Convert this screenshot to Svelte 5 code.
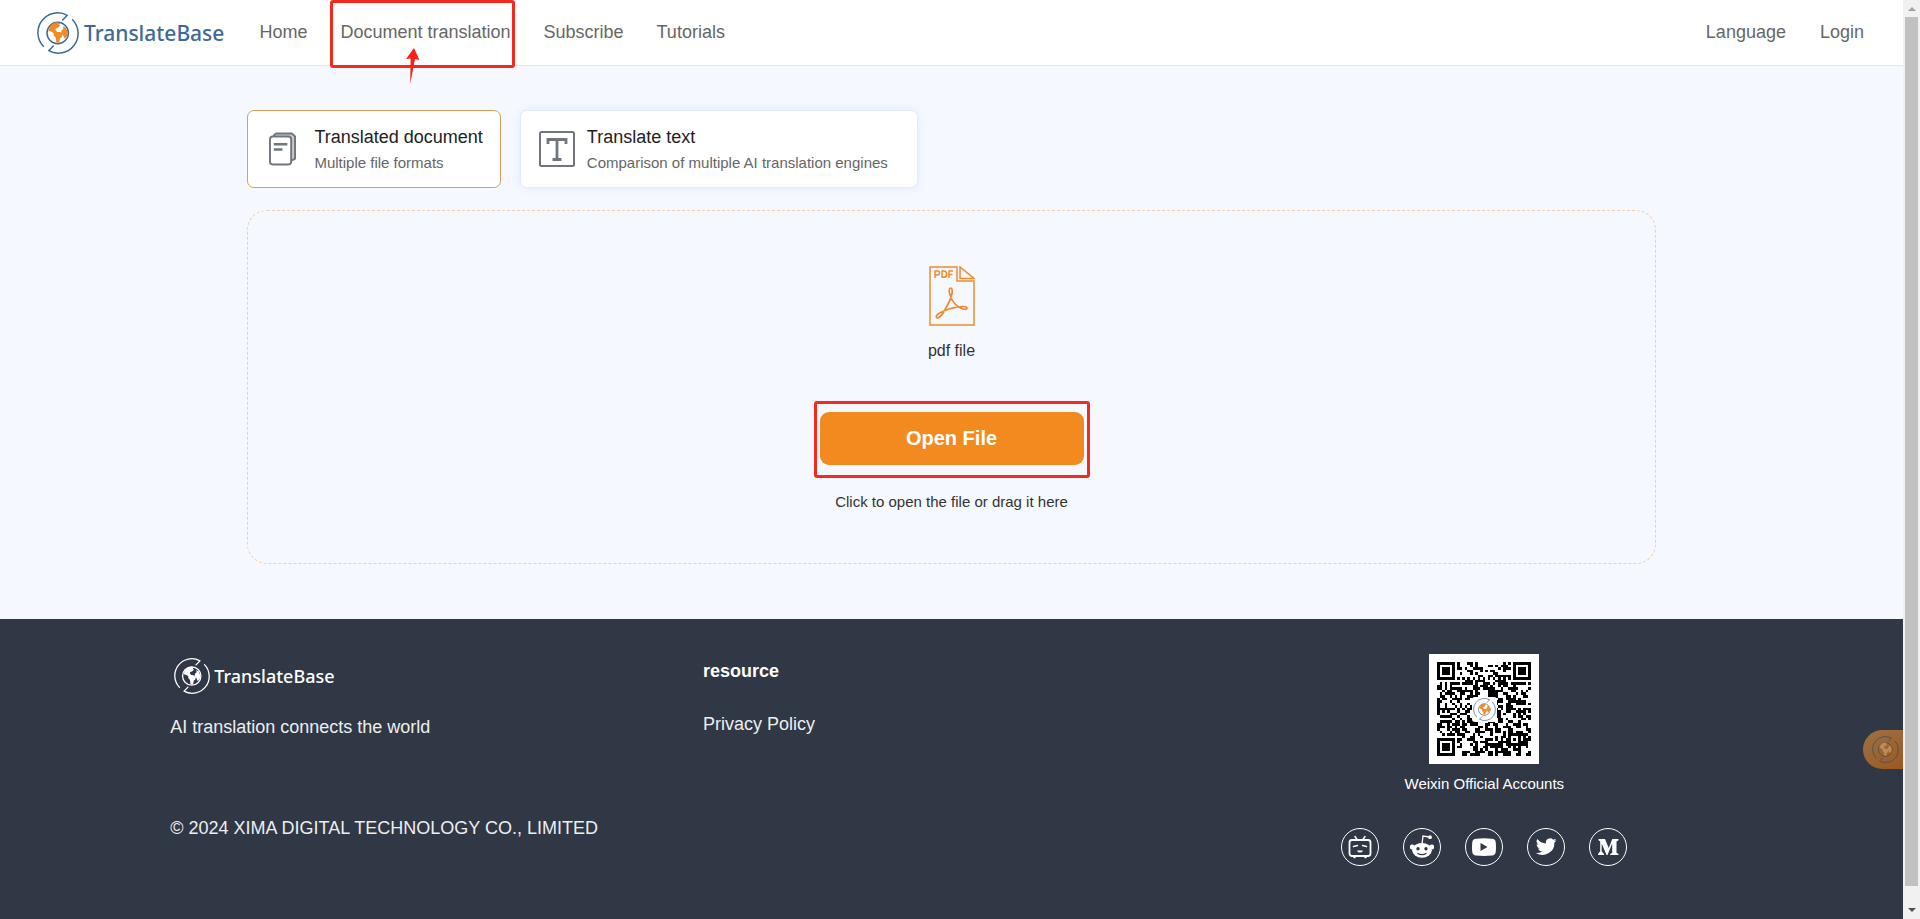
<script>
  const SIZE = 37;

  // Square rings: three finder marks and one alignment mark.
  function ring(x, y, cx, cy, reach) {
    const d = Math.max(Math.abs(x - cx), Math.abs(y - cy));
    if (d > reach) return null;
    return reach === 4 ? d === 3 || d <= 1 : d !== 1;
  }

  function buildCode() {
    let seed = 20243;
    let path = '';
    for (let y = 0; y < SIZE; y++) {
      for (let x = 0; x < SIZE; x++) {
        seed = (seed * 1103515245 + 12345) % 2147483648;
        let dark = (seed >> 12) % 100 < 50;
        if (x === 6 || y === 6) dark = (x + y) % 2 === 0;
        const marks = [
          ring(x, y, 3, 3, 4),
          ring(x, y, 33, 3, 4),
          ring(x, y, 3, 33, 4),
          ring(x, y, 30, 30, 2)
        ];
        for (const m of marks) if (m !== null) dark = m;
        if (dark) path += `M${x} ${y}h1v1h-1z`;
      }
    }
    return path;
  }

  const code = buildCode();
  const nav = ['Home', 'Document translation', 'Subscribe', 'Tutorials'];
</script>

{#snippet emblem(line, land)}
  <svg class="emblem" viewBox="0 0 42 42" fill="none" aria-hidden="true">
    <g stroke={line} stroke-width="1.500" stroke-linecap="round" stroke-linejoin="round">
      <path d="M6.400 34.300A19.800 19.800 0 0 1 30.300 3.300L25.700 8" />
      <path d="M35.600 7.700A19.800 19.800 0 0 1 11.700 38.700L16.300 34" />
      <circle cx="20.700" cy="21" r="10.700" />
    </g>
    <path fill={land} d="M11.500 19c.5-4.500 4-8.500 8.500-8.700l3 .7-1 1.500 1.200 1-2.100 2.200-2.300.7-.2 1.800 1.600 1.700 2.800.2 2.800 2.200-1 2.700-1.800 1.600-.7 4-2 .2-1.200-1-.4-4-2.100-2.500.2-2-2.900-1.700z" />
    <path fill={land} d="M26 14.200l2.800 1.300 1.900 4.800-.5 3.700-2.700 2.700-1.500-3.700-1.900-1.700.5-3.100 1.700-1.200z" />
  </svg>
{/snippet}

<div class="screen">
  <div class="page">
    <header>
      <a class="brand" href="#home">
        {@render emblem('#3d6a9b', '#f38a22')}
        <span>TranslateBase</span>
      </a>
      <nav>
        {#each nav as item, i}
          <a href="#{item.split(' ')[0].toLowerCase()}" class:marked={i === 1}>
            {item}
            {#if i === 1}
              <svg class="arrow" viewBox="0 0 14 36" aria-hidden="true">
                <path d="M8 0l5.500 12-4.500-1L4.200 36 4.600 10.500 0 11z" fill="#fb2015" />
              </svg>
            {/if}
          </a>
        {/each}
      </nav>
      <nav class="account">
        <a href="#language">Language</a>
        <a href="#login">Login</a>
      </nav>
    </header>

    <main>
      <div class="modes">
        <button class="mode active" type="button">
          <svg class="docs" viewBox="0 0 28 34" fill="none" stroke="#71757f" stroke-width="2" stroke-linejoin="round" aria-hidden="true">
            <path d="M5 4V3l2-2h17l3 3v23l-3 2" fill="#c9cbd0" />
            <rect x="1" y="4" width="22" height="29" rx="3" fill="#fff" />
            <path d="M5 12h14M5 17.500h9" stroke-width="2.500" />
          </svg>
          <span class="label"><b>Translated document</b><small>Multiple file formats</small></span>
        </button>
        <button class="mode text" type="button">
          <svg class="letter" viewBox="0 0 36 36" fill="none" stroke="#71757f" aria-hidden="true">
            <rect x="1" y="1" width="34" height="34" rx="1.500" stroke-width="2" />
            <path d="M9 13V8.500h18V13M18 8.500v20M13.500 28.500h9" stroke-width="2.800" />
          </svg>
          <span class="label"><b>Translate text</b><small>Comparison of multiple AI translation engines</small></span>
        </button>
      </div>

      <section class="drop">
        <svg class="pdf" viewBox="0 0 46 60" fill="none" stroke="#ee8c2d" stroke-width="1.500" aria-hidden="true">
          <path d="M28 1H1v58h44V15H28z" />
          <path d="M31 1v11.500h14z" />
          <path d="M6 12V5h2.500a2 2 0 0 1 0 4H6M13 5v6.300h1.500a3.150 3.150 0 0 0 0-6.300zM20 12V5h4M20 8.500h3.500" />
          <path d="M21.500 22C25 22 23 32 17 42 13 50 9 53 7.500 51.500 6 49 12 45.500 20 43 28 41 37 39.500 38 42 38 45 31 43 26 38 21 33 18.500 22 21.500 22z" stroke-width="1.700" />
        </svg>
        <p class="kind">pdf file</p>
        <div class="frame"><button class="open" type="button">Open File</button></div>
        <p class="hint">Click to open the file or drag it here</p>
      </section>
    </main>

    <footer>
      <div class="columns">
        <div class="about">
          <a class="brand small" href="#home">
            {@render emblem('#ffffff', '#ffffff')}
            <span>TranslateBase</span>
          </a>
          <p class="motto">AI translation connects the world</p>
          <p>© 2024 XIMA DIGITAL TECHNOLOGY CO., LIMITED</p>
        </div>
        <div class="links">
          <h2>resource</h2>
          <a href="#privacy">Privacy Policy</a>
        </div>
        <div class="contact">
          <div class="qr">
            <svg viewBox="0 0 37 37" shape-rendering="crispEdges" role="img" aria-label="QR code"><path d={code} /></svg>
            <span class="seal">{@render emblem('#5c7f9f', '#f38a22')}</span>
          </div>
          <p>Weixin Official Accounts</p>
          <div class="social">
            <a href="#bilibili" aria-label="Bilibili">
              <svg viewBox="0 0 24 24" fill="none" stroke="#fff" stroke-width="1.800" stroke-linecap="round">
                <rect x="1.500" y="5" width="21" height="16" rx="2.500" />
                <path d="M7 1.500L9.500 5M17 1.500L14.500 5M5.500 11.500l4-1M18.500 11.500l-4-1M10 16l1 .8 1-.8 1 .8 1-.8M6 22.500h1M17 22.500h1" stroke-width="1.500" />
              </svg>
            </a>
            <a href="#reddit" aria-label="Reddit">
              <svg viewBox="0 0 24 24">
                <ellipse cx="12" cy="15.300" rx="9.800" ry="7.400" fill="#fff" />
                <circle cx="2.300" cy="12" r="2.500" fill="#fff" /><circle cx="21.700" cy="12" r="2.500" fill="#fff" />
                <path d="M12 9l1-8 6.500 1" fill="none" stroke="#fff" stroke-width="1.300" />
                <circle cx="20" cy="2.200" r="1.900" fill="#fff" />
                <circle cx="8" cy="13.800" r="1.700" fill="#303845" /><circle cx="16" cy="13.800" r="1.700" fill="#303845" />
                <path d="M7.500 18.200q4.500 3 9 0" fill="none" stroke="#303845" stroke-width="1.200" />
              </svg>
            </a>
            <a href="#youtube" aria-label="YouTube">
              <svg viewBox="0 0 24 24"><path fill="#fff" d="M4 3.700q8-.8 16 0 3.500.3 3.700 3.500.6 5 0 10-.4 3-3.700 3.300-8 .8-16 0-3.300-.3-3.700-3.300-.6-5 0-10Q.6 4 4 3.700z" /><path fill="#303845" d="M8.500 8v8l7-4z" /></svg>
            </a>
            <a href="#twitter" aria-label="Twitter">
              <svg viewBox="0 0 24 24"><path fill="#fff" d="M22.500 5.300a8 8 0 0 1-2.400.7 4.200 4.200 0 0 0 1.800-2.300 8.500 8.500 0 0 1-2.700 1A4.200 4.200 0 0 0 12 8.500 12 12 0 0 1 3.300 4.100a4.200 4.200 0 0 0 1.300 5.600 4 4 0 0 1-1.900-.5 4.200 4.200 0 0 0 3.400 4.200 4 4 0 0 1-1.900.1 4.200 4.200 0 0 0 3.900 2.900A8.500 8.500 0 0 1 1.900 18a12 12 0 0 0 18.500-10.600 9 9 0 0 0 2.100-2.100z" /></svg>
            </a>
            <a href="#medium" aria-label="Medium">
              <svg viewBox="0 0 24 24"><path fill="#fff" d="M2.500 4H9l3.700 9L16.300 4h6.200v1.200l-2 1.300v11.200l2 1.200V20h-8.300v-1.100l2-1.200V8.500L11.500 20h-1L5.700 8.500v7.700l2.300 2.700V20H2v-1.100l2.200-2.700V6.500L2.500 5.200z" /></svg>
            </a>
          </div>
        </div>
      </div>
      <button class="float" type="button" aria-label="Assistant">{@render emblem('#525156', '#c08a55')}</button>
    </footer>
  </div>

  <div class="scroll" aria-hidden="true">
    <i class="up"></i>
    <div class="thumb"></div>
    <i class="down"></i>
  </div>
</div>

<style>
  :global(body) {
    margin: 0;
    font-family: "Liberation Sans", Arial, sans-serif;
  }
  .screen {
    display: flex;
    min-height: 100vh;
  }
  .page {
    flex: 1;
    display: flex;
    flex-direction: column;
    background: #f5f8ff;
  }
  a {
    color: inherit;
    text-decoration: none;
  }
  p,
  h2 {
    margin: 0;
  }
  svg {
    display: block;
  }
  button {
    font-family: inherit;
    cursor: pointer;
  }
  header {
    display: flex;
    align-items: center;
    height: 65px;
    padding: 0 39px 0 37px;
    background: #fff;
    border-bottom: 1px solid #e4e5e8;
    color: #666;
    font-size: 18px;
  }
  .brand {
    display: flex;
    align-items: center;
    gap: 5px;
    color: #3d6a9b;
    font: 500 21px "Noto Sans", sans-serif;
  }
  .brand .emblem {
    width: 42px;
    height: 42px;
  }
  nav {
    display: flex;
    gap: 33px;
    margin-left: 35px;
    padding-bottom: 2px;
    line-height: 22px;
  }
  .account {
    gap: 34px;
    margin-left: auto;
  }
  .marked {
    position: relative;
  }
  .marked::before {
    content: "";
    position: absolute;
    inset: -21px -4px -25px -10px;
    border: 3px solid #f22a20;
    border-radius: 3px;
  }
  .arrow {
    position: absolute;
    left: 66px;
    top: 27px;
    width: 14px;
    height: 36px;
  }
  main {
    width: 74%;
    margin: 0 auto;
    padding: 44px 0 55px;
  }
  .modes {
    display: flex;
    gap: 19px;
  }
  .mode {
    display: flex;
    align-items: center;
    gap: 18px;
    height: 78px;
    padding: 0 17px 0 21px;
    background: #fff;
    border: 1px solid #e4ecfa;
    border-radius: 7px;
    box-shadow: 0 0 8px #dfe9fb;
    text-align: left;
  }
  .mode.active {
    border-color: #d9a05c;
    box-shadow: none;
  }
  .mode.text {
    gap: 12px;
    padding: 0 29px 0 18px;
  }
  .docs {
    width: 27px;
    height: 34px;
  }
  .letter {
    width: 36px;
    height: 36px;
  }
  .label {
    display: flex;
    flex-direction: column;
    padding-top: 2px;
  }
  .label b {
    color: #222;
    font-size: 18px;
    font-weight: 400;
    line-height: 26px;
  }
  .label small {
    color: #666;
    font-size: 15px;
    line-height: 26px;
  }
  .drop {
    display: flex;
    flex-direction: column;
    align-items: center;
    margin-top: 22px;
    padding: 55px 0 51px;
    border: 1px dashed #f3cfaa;
    border-radius: 20px;
    color: #333;
  }
  .pdf {
    width: 46px;
    height: 60px;
  }
  .kind {
    margin-top: 15px;
    font-size: 16px;
    line-height: 20px;
  }
  .frame {
    margin-top: 40px;
    padding: 8px 3px 10px;
    border: 3px solid #f22a20;
    border-radius: 3px;
  }
  .open {
    display: block;
    width: 264px;
    height: 53px;
    border: 0;
    border-radius: 9px;
    background: #f38a20;
    color: #fff;
    font-size: 20px;
    font-weight: 700;
  }
  .hint {
    margin-top: 14px;
    font-size: 15px;
    line-height: 20px;
  }
  footer {
    position: relative;
    flex: 1;
    background: #303845;
    color: #eceef0;
    font-size: 18px;
    line-height: 22px;
  }
  .columns {
    display: grid;
    grid-template-columns: repeat(3, 1fr);
    width: 84%;
    margin: 0 auto;
    padding: 35px 0 51px;
  }
  .about,
  .links {
    padding-left: 18px;
  }
  .small {
    gap: 4px;
    margin: 4px 0 0 4px;
    color: #fff;
    font-size: 18px;
  }
  .small .emblem {
    width: 36px;
    height: 36px;
  }
  .small + .motto {
    margin: 22px 0 79px;
  }
  .links h2 {
    margin: 6px 0 31px;
    color: #fff;
    font-size: 18px;
    line-height: 22px;
  }
  .contact {
    display: flex;
    flex-direction: column;
    align-items: center;
    color: #fff;
    font-size: 15px;
  }
  .qr {
    position: relative;
    padding: 8px;
    background: #fff;
  }
  .qr > svg {
    width: 94px;
    height: 94px;
  }
  .seal {
    position: absolute;
    top: 43px;
    left: 43px;
    padding: 1px;
    border-radius: 3px;
    background: #fff;
  }
  .seal .emblem {
    width: 23px;
    height: 23px;
  }
  .contact p {
    margin: 9px 0 33px;
  }
  .social {
    display: flex;
    gap: 24px;
  }
  .social a {
    display: grid;
    place-items: center;
    width: 36px;
    height: 36px;
    border: 1px solid #fff;
    border-radius: 50%;
  }
  .social svg {
    width: 24px;
    height: 24px;
  }
  .float {
    position: absolute;
    right: 0;
    top: 111px;
    width: 40px;
    height: 39px;
    padding: 0 4px 0 9px;
    border: 0;
    border-radius: 20px 0 0 20px;
    background: linear-gradient(150deg, #9c7246, #9c5820);
  }
  .float .emblem {
    width: 27px;
    height: 27px;
  }
  .scroll {
    display: flex;
    flex-direction: column;
    align-items: center;
    width: 17px;
    background: #f1f1f1;
  }
  .thumb {
    flex: 1;
    width: 13px;
    margin: 6px 0 22px;
    background: #c1c1c1;
  }
  .up,
  .down {
    border: 4px solid transparent;
  }
  .up {
    margin-top: 3px;
    border-bottom-color: #a3a3a3;
  }
  .down {
    margin-bottom: 3px;
    border-top-color: #505050;
  }
</style>
